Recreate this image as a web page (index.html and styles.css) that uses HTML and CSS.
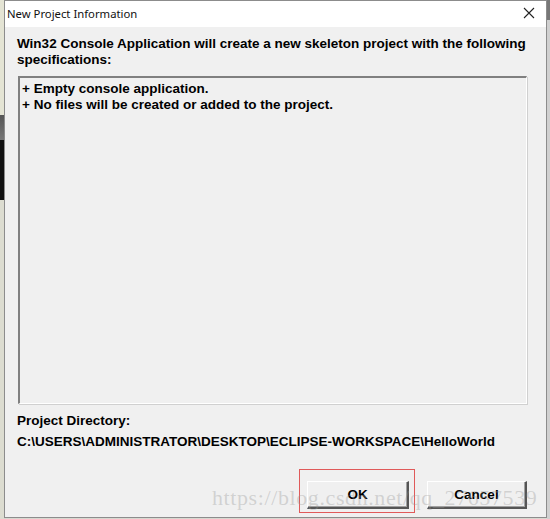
FILE: index.html
```html
<!DOCTYPE html>
<html lang="en">
<head>
    <meta charset="UTF-8">
    <title>New Project Information</title>
    <link rel="stylesheet" href="styles.css">
</head>
<body>
    <div class="desktop-left"></div>

    <div class="dialog">
        <div class="title-bar">
            <span class="title">New Project Information</span>
            <span class="close-btn">
                <svg width="12" height="12" viewBox="0 0 12 12">
                    <path d="M1 1 L11 11 M11 1 L1 11" stroke="#222" stroke-width="1.1" fill="none"/>
                </svg>
            </span>
        </div>

        <div class="dialog-body">
            <p class="intro">Win32 Console Application will create a new skeleton project with the following specifications:</p>

            <div class="spec-box">
                <div>+ Empty console application.</div>
                <div>+ No files will be created or added to the project.</div>
            </div>

            <div class="dir-label">Project Directory:</div>
            <div class="dir-path">C:\USERS\ADMINISTRATOR\DESKTOP\ECLIPSE-WORKSPACE\HelloWorld</div>

            <div class="button-row">
                <div class="highlight">
                    <button class="win-btn">OK</button>
                </div>
                <button class="win-btn cancel">Cancel</button>
            </div>
        </div>

        <div class="watermark">https://blog.csdn.net/qq_27657539</div>
    </div>

    <div class="desktop-right"></div>
</body>
</html>
```

FILE: styles.css
```css
body {
    margin: 0;
    padding: 0;
    width: 550px;
    height: 519px;
    display: flex;
    background: #d8d8d0;
    overflow: hidden;
    font-family: "Liberation Sans", Arial, sans-serif;
    color: #000;
}

.desktop-left {
    width: 4px;
    background: linear-gradient(#e4e4d4 0, #e4e4d4 115px, #555 115px, #777 140px, #111 140px, #111 200px, #dcdcd0 200px);
}

.desktop-right {
    width: 3px;
    background: linear-gradient(#777 0, #777 20px, #d0d0d0 20px);
}

/* dialog window */
.dialog {
    position: relative;
    width: 541px;
    height: 516px;
    border: 1px solid #8c8c8c;
    background: #f0f0f0;
    display: flex;
    flex-direction: column;
}

.title-bar {
    height: 24px;
    background: #fff;
    display: flex;
    align-items: center;
    justify-content: space-between;
    padding: 0 11px 2px 2px;
}

.title {
    font-family: "Noto Sans", "Open Sans", sans-serif;
    font-size: 11.3px;
    color: #111;
}

.close-btn {
    display: flex;
    align-items: center;
}

.dialog-body {
    padding: 9px 19px 0 12px;
    font-weight: bold;
    font-size: 13.5px;
}

.intro {
    margin: 0;
    line-height: 16px;
}

.spec-box {
    margin: 8px 0 0 1px;
    height: 319px;
    padding: 3px 2px;
    border-top: 2px solid #808080;
    border-left: 2px solid #808080;
    border-right: 1px solid #fff;
    border-bottom: 1px solid #fff;
    box-shadow: 1px 1px 0 #d0d0d0;
    line-height: 16px;
}

.dir-label {
    margin-top: 9px;
    line-height: 16px;
}

.dir-path {
    margin-top: 5px;
    line-height: 16px;
}

.button-row {
    margin-top: 31px;
    display: flex;
    justify-content: flex-end;
    align-items: flex-start;
    gap: 12px;
}

.highlight {
    border: 1px solid #e05a5a;
    padding: 11px 5px 3px 7px;
    margin-top: -12px;
}

.win-btn {
    width: 102px;
    height: 28px;
    font-family: "Liberation Sans", Arial, sans-serif;
    font-weight: bold;
    font-size: 13.5px;
    background: #f0f0f0;
    border-top: 1px solid #fff;
    border-left: 1px solid #fff;
    border-right: 2px solid #555;
    border-bottom: 2px solid #555;
    box-shadow: inset -1px -1px 0 #a0a0a0;
    padding: 0;
}

.cancel {
    width: 100px;
}

.watermark {
    position: absolute;
    left: 207px;
    top: 484px;
    font-family: "Liberation Serif", serif;
    font-size: 22px;
    color: rgba(150, 150, 150, 0.35);
    letter-spacing: 0.6px;
    pointer-events: none;
}
```
